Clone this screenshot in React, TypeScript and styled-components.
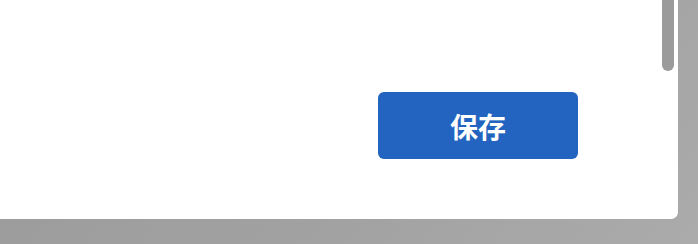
import { createGlobalStyle, styled } from 'styled-components';

const GlobalStyle = createGlobalStyle`
  html, body {
    margin: 0;
    padding: 0;
    width: 698px;
    height: 244px;
    overflow: hidden;
    background: linear-gradient(135deg, #999999 0%, #a2a2a2 60%, #ababab 100%);
    font-family: "Noto Sans CJK SC", "Noto Sans", sans-serif;
  }
`;

const Panel = styled.div`
  position: relative;
  width: 678px;
  height: 219px;
  box-sizing: border-box;
  background-color: #ffffff;
  border-bottom-right-radius: 7px;
  display: flex;
  justify-content: flex-end;
  align-items: flex-start;
  padding-top: 92px;
  padding-right: 100px;
`;

const ScrollThumb = styled.div`
  position: absolute;
  top: 0;
  right: 4px;
  width: 12px;
  height: 71px;
  background-color: #9b9b9b;
  border-bottom-left-radius: 6px;
  border-bottom-right-radius: 6px;
`;

const SaveButton = styled.button`
  width: 200px;
  height: 67px;
  border: 0;
  border-radius: 6px;
  background-color: #2264c0;
  color: #ffffff;
  font-family: "Noto Sans CJK SC", "Noto Sans", sans-serif;
  font-size: 28px;
  font-weight: 700;
  line-height: 1;
  padding: 0;
  cursor: pointer;
`;

export default function App() {
  return (
    <>
      <GlobalStyle />
      <Panel>
        <SaveButton type="button">保存</SaveButton>
        <ScrollThumb />
      </Panel>
    </>
  );
}
